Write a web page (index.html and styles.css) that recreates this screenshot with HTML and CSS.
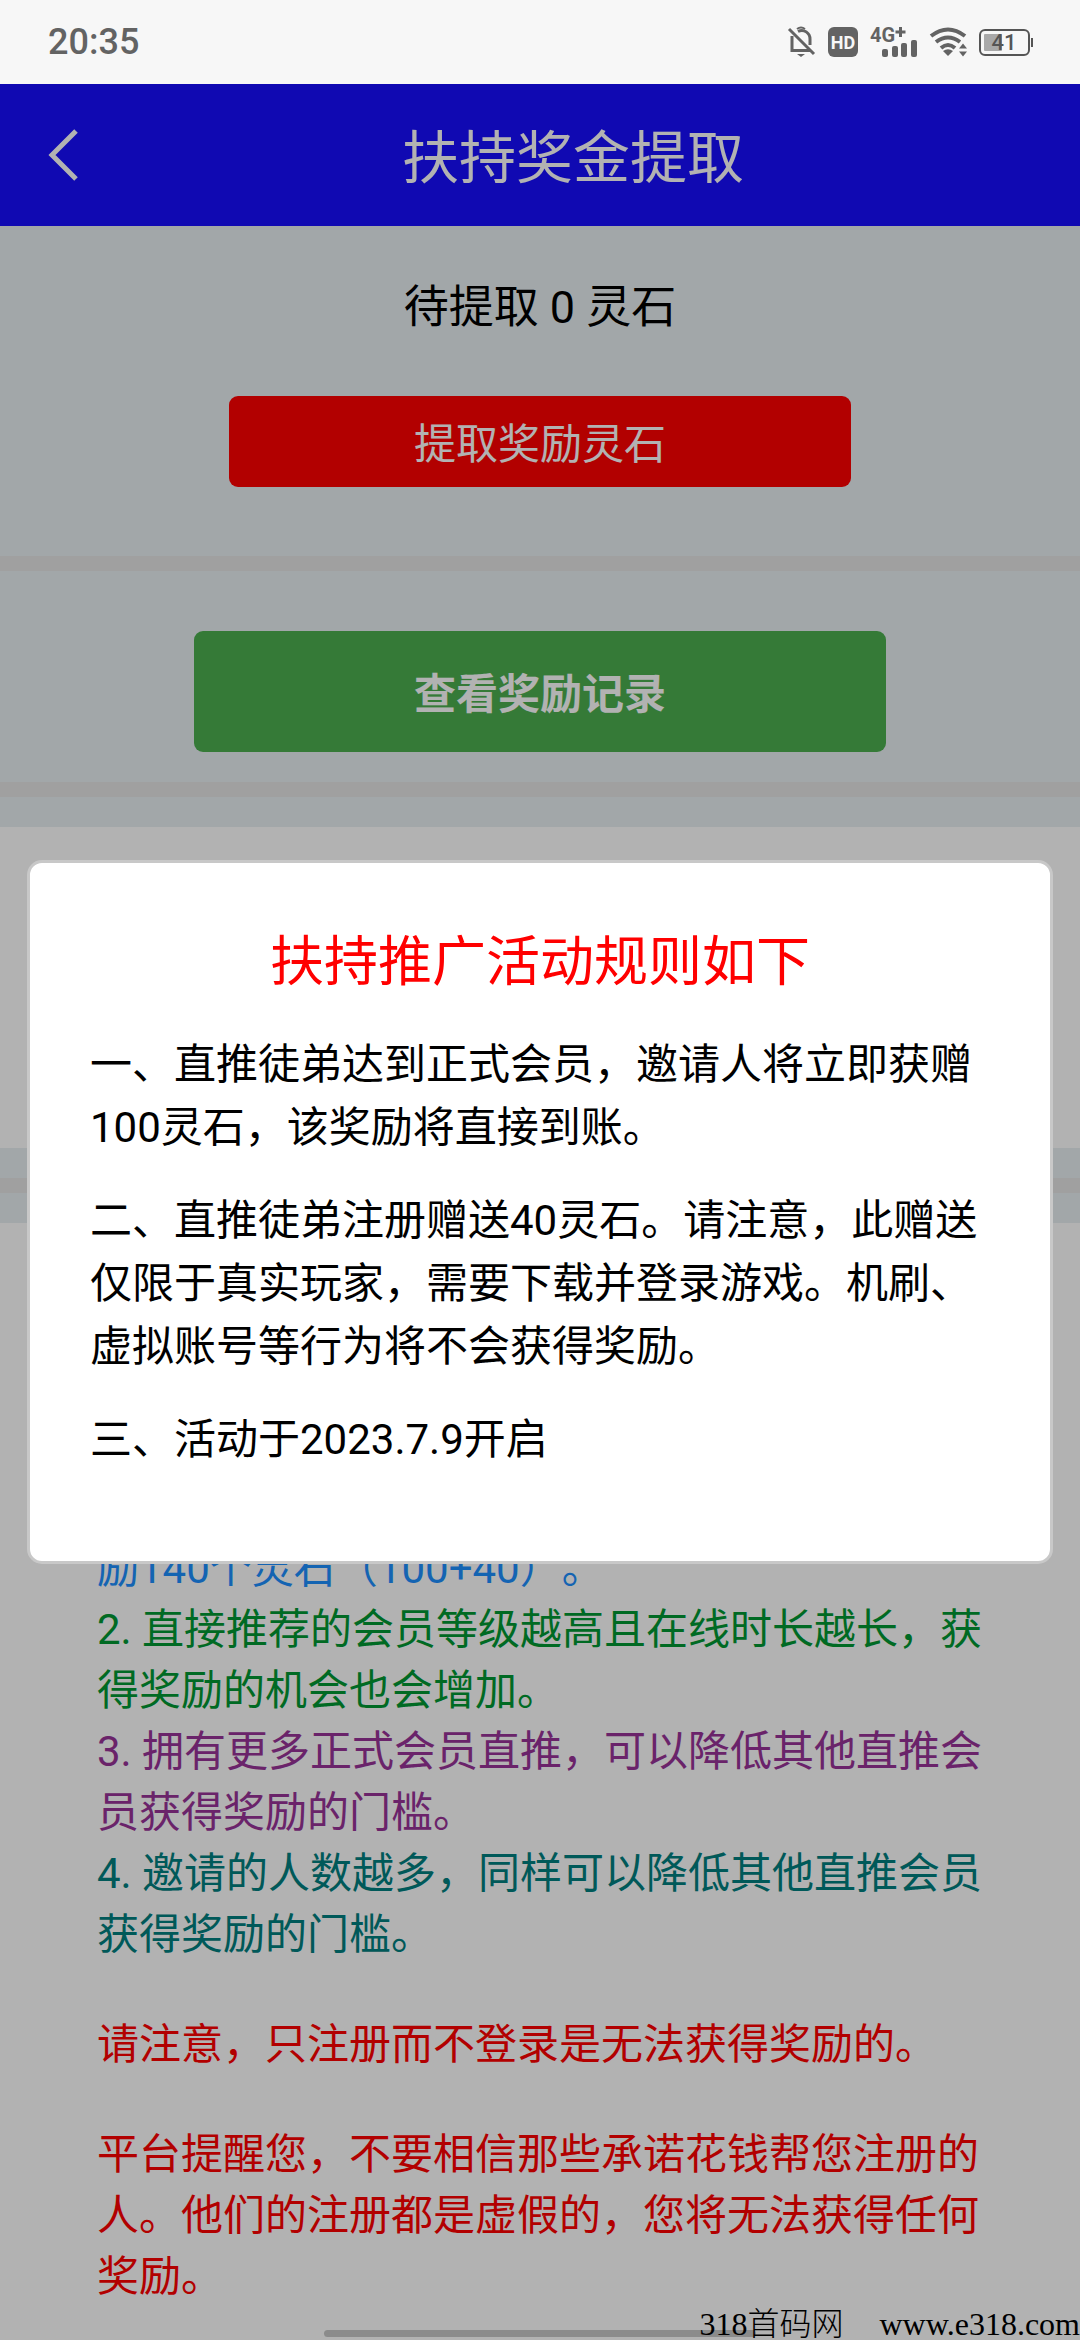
FILE: index.html
```html
<!DOCTYPE html>
<html lang="zh-CN">
<head>
<meta charset="utf-8">
<meta name="viewport" content="width=device-width">
<title>扶持奖金提取</title>
<link rel="stylesheet" href="styles.css">
</head>
<body>
<div class="status-bar">
  <time class="clock">20:35</time>
  <div class="status-icons">
    <svg class="icon-bell" width="28" height="32" viewBox="0 0 28 32" fill="none" stroke="#636363" stroke-width="3">
      <path d="M4 10V24.500H22M10 5.500C16 2.500 22 7 22 13V19M1 3L26 28"/>
      <path d="M9 28H17L13 31Z" fill="#636363" stroke="none"/>
      <path d="M9 3Q13 0 17 3" stroke-width="2"/>
    </svg>
    <svg class="icon-hd" width="30" height="30" viewBox="0 0 30 30">
      <rect width="30" height="30" rx="6" fill="#636363"/>
      <text x="15" y="22" text-anchor="middle" class="hd-text">HD</text>
    </svg>
    <svg class="icon-signal" width="48" height="32" viewBox="0 0 48 32" fill="#636363">
      <text x="0" y="16" class="net-text">4G</text>
      <path d="M29 1h3v3.500h3.500v3H32V11h-3V7.500h-3.500v-3H29z"/>
      <rect x="12" y="23" width="6" height="8" rx="2"/>
      <rect x="22" y="20" width="6" height="11" rx="2"/>
      <rect x="31" y="17" width="6" height="14" rx="2"/>
      <rect x="41" y="14" width="6" height="17" rx="2"/>
    </svg>
    <svg class="icon-wifi" width="37" height="30" viewBox="0 0 37 30" fill="none" stroke="#636363" stroke-width="4">
      <path d="M1 9Q18 -4 35 9M6 15Q18 6 30 15M11 21Q18 15 25 21"/>
      <path d="M13 24Q18 20.500 23 24L18 29Z" fill="#636363" stroke="none"/>
      <path d="M29 21.500L33 16.500L37 21.500ZM29 24.500H37L33 29.500Z" fill="#636363" stroke="none"/>
    </svg>
    <svg class="icon-battery" width="54" height="27" viewBox="0 0 54 27">
      <rect x="1" y="1" width="49" height="25" rx="5" fill="none" stroke="#555" stroke-width="2"/>
      <rect x="5" y="5" width="18" height="17" rx="1" fill="#a9a9a9"/>
      <path d="M52 9h2v9h-2z" fill="#555"/>
      <text x="25" y="21" text-anchor="middle" class="battery-text">41</text>
    </svg>
  </div>
</div>

<div class="screen">
  <header class="app-bar">
    <button class="back" type="button" aria-label="返回">
      <svg width="30" height="54" viewBox="0 0 30 54" fill="none" stroke="#fff" stroke-width="5"><path d="M28 3L4 27L28 51"/></svg>
    </button>
    <h1 class="app-title">扶持奖金提取</h1>
  </header>

  <main>
    <section class="balance">
      <p class="balance-text">待提取 0 灵石</p>
      <button class="withdraw" type="button">提取奖励灵石</button>
    </section>
    <section class="records">
      <button class="view-records" type="button">查看奖励记录</button>
    </section>
    <section class="panel"></section>
    <hr class="divider">
    <article class="tips">
      <p class="tip-blue">励140个灵石（100+40）。</p>
      <p class="tip-green">2. 直接推荐的会员等级越高且在线时长越长，获得奖励的机会也会增加。</p>
      <p class="tip-purple">3. 拥有更多正式会员直推，可以降低其他直推会员获得奖励的门槛。</p>
      <p class="tip-teal">4. 邀请的人数越多，同样可以降低其他直推会员获得奖励的门槛。</p>
      <p class="warning">请注意，只注册而不登录是无法获得奖励的。</p>
      <p class="warning">平台提醒您，不要相信那些承诺花钱帮您注册的人。他们的注册都是虚假的，您将无法获得任何奖励。</p>
    </article>
  </main>

  <div class="overlay">
    <div class="dialog" role="dialog" aria-labelledby="rules-title">
      <h2 class="dialog-title" id="rules-title">扶持推广活动规则如下</h2>
      <p>一、直推徒弟达到正式会员，邀请人将立即获赠100灵石，该奖励将直接到账。</p>
      <p>二、直推徒弟注册赠送40灵石。请注意，此赠送仅限于真实玩家，需要下载并登录游戏。机刷、虚拟账号等行为将不会获得奖励。</p>
      <p>三、活动于2023.7.9开启</p>
    </div>
  </div>
  <div class="home-bar"></div>
  <div class="watermark"><span>318首码网</span><span>www.e318.com</span></div>
</div>
</body>
</html>
```
FILE: styles.css
```css
* {
  box-sizing: border-box;
}

body {
  margin: 0;
  min-height: 100vh;
  display: flex;
  flex-direction: column;
  background: #fff;
  color: #000;
  font-family: Roboto, "Noto Sans CJK SC", sans-serif;
  font-size: 42px;
  text-spacing-trim: space-all;
}

h1, h2, p {
  margin: 0;
  font-weight: 400;
}

button {
  border: 0;
  padding: 0;
  color: #fff;
  font: inherit;
}

.status-bar {
  height: 84px;
  padding: 0 47px 0 48px;
  display: flex;
  align-items: center;
  justify-content: space-between;
  background: #f7f7f7;
  color: #636363;
}

.clock {
  font-size: 36px;
  font-weight: 500;
}

.status-icons {
  display: flex;
  align-items: center;
  gap: 12px;
}

.status-icons svg {
  overflow: visible;
}

.hd-text {
  fill: #f7f7f7;
  font-size: 18px;
  font-weight: 700;
}

.net-text {
  font-size: 20px;
  font-weight: 700;
}

.battery-text {
  fill: #555;
  font-size: 22px;
  font-weight: 500;
}

.screen {
  position: relative;
  flex: 1;
  overflow: hidden;
}

.app-bar {
  height: 142px;
  display: flex;
  align-items: center;
  background: #170dff;
  color: #fff;
}

.back {
  width: 96px;
  height: 96px;
  padding-left: 48px;
  display: flex;
  align-items: center;
  background: none;
}

.app-title {
  flex: 1;
  margin-right: 30px;
  padding-bottom: 4px;
  font-size: 57px;
  text-align: center;
}

.balance,
.records {
  display: flex;
  flex-direction: column;
  align-items: center;
  background: #e8eff3;
  border-bottom: 15px solid #e5e5e5;
}

.balance {
  padding: 49px 0 69px;
  gap: 55px;
}

.balance-text {
  font-size: 45px;
  line-height: 66px;
}

.withdraw,
.view-records {
  padding-bottom: 3px;
  border-radius: 9px;
}

.withdraw {
  width: 622px;
  height: 91px;
  background: #f00;
}

.records {
  padding: 60px 0 30px;
}

.view-records {
  width: 692px;
  height: 121px;
  background: #4caf50;
  font-weight: 700;
}

.panel {
  height: 351px;
  border-top: 30px solid #e8eff3;
}

.divider {
  height: 75px;
  margin: 0;
  padding: 30px 0;
  border: 0;
  background: #e5e5e5 content-box;
  box-shadow: inset 0 30px #e8eff3, inset 0 -30px #e8eff3;
}

.tips {
  padding: 315px 97px 30px;
  line-height: 61px;
}

.tip-blue {
  color: #1e90ff;
}

.tip-green {
  color: #093;
}

.tip-purple {
  color: #939;
}

.tip-teal {
  color: #008080;
}

.warning {
  margin-top: 49px;
  color: #f00;
}

.overlay {
  position: absolute;
  inset: 0;
  padding: 0 27px;
  display: flex;
  align-items: center;
  background: rgba(0, 0, 0, 0.3);
}

.dialog {
  flex: 1;
  padding: 59px 60px 60px;
  border: 3px solid #c8c8c8;
  border-radius: 15px;
  background: #fff;
  line-height: 63px;
}

.dialog p {
  margin-bottom: 30px;
}

.dialog-title {
  margin-bottom: 30px;
  color: #f00;
  font-size: 54px;
  line-height: 81px;
  text-align: center;
}

.home-bar {
  position: absolute;
  bottom: 3px;
  left: 30%;
  width: 40%;
  height: 7px;
  border-radius: 4px;
  background: #8b8b8b;
}

.watermark {
  position: absolute;
  right: 0;
  bottom: 0;
  display: flex;
  gap: 36px;
  font-family: "Liberation Serif", "Noto Sans CJK SC", serif;
  font-size: 32px;
  font-weight: 300;
  line-height: 32px;
}
```
